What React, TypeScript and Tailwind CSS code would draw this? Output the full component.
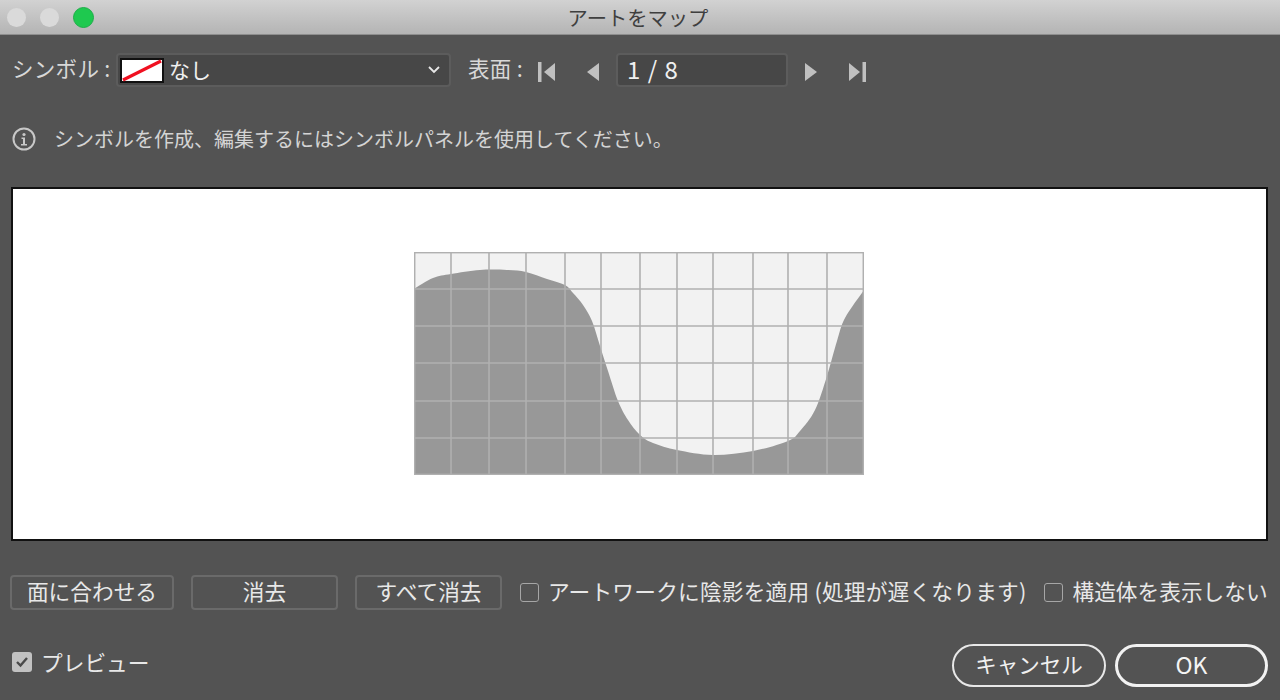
import React from "react";

const font = { fontFamily: '"Noto Sans CJK JP", "Noto Sans", sans-serif' };
const xs = [0.5, 37, 75, 112, 151, 187, 226, 263, 299, 339, 374, 413, 449.5];
const ys = [0.5, 37, 74, 111, 149, 186, 222.5];
const pts: [number, number][] = [
  [0, 37], [19, 26], [37, 22], [66, 18], [93, 18], [112, 20], [133, 27], [151, 33], [159, 41], [169, 53],
  [178, 69], [186, 94], [194, 119], [204, 149], [214, 168], [226, 183], [239, 191], [263, 198], [299, 203],
  [339, 199], [374, 189], [386, 179], [401, 158], [413, 124], [423, 89], [431, 66], [450, 38],
];

function smooth(p: [number, number][]) {
  let d = `M${p[0][0]} ${p[0][1]}`;
  for (let i = 0; i < p.length - 1; i++) {
    const a = p[Math.max(0, i - 1)];
    const b = p[i];
    const c = p[i + 1];
    const e = p[Math.min(p.length - 1, i + 2)];
    const c1x = b[0] + (c[0] - a[0]) / 6;
    const c1y = b[1] + (c[1] - a[1]) / 6;
    const c2x = c[0] - (e[0] - b[0]) / 6;
    const c2y = c[1] - (e[1] - b[1]) / 6;
    d += ` C${c1x} ${c1y} ${c2x} ${c2y} ${c[0]} ${c[1]}`;
  }
  return d + " L450 223 L0 223 Z";
}

function Chart() {
  return (
    <svg width="450" height="223" viewBox="0 0 450 223" className="block">
      <rect x="0" y="0" width="450" height="223" fill="#f2f2f2" />
      <path d={smooth(pts)} fill="#989898" />
      {xs.map((x) => (
        <line key={x} x1={x} x2={x} y1="0" y2="223" stroke="#b0b0b0" strokeWidth="1.6" />
      ))}
      {ys.map((y) => (
        <line key={y} y1={y} y2={y} x1="0" x2="450" stroke="#b0b0b0" strokeWidth="1.6" />
      ))}
      <rect x="0.5" y="0.5" width="449" height="222" fill="none" stroke="#b0b0b0" strokeWidth="1.4" />
    </svg>
  );
}

function Tri({ dir, bar }: { dir: "l" | "r"; bar?: boolean }) {
  return (
    <svg width="18" height="20" viewBox="0 0 18 20" className="block mt-[3px]">
      {dir === "l" ? (
        <>
          {bar && <rect x="0" y="0" width="3.5" height="20" fill="#c0c0c0" />}
          <path d={bar ? "M17 1 L6 10 L17 19 Z" : "M14 1 L2 10 L14 19 Z"} fill="#c0c0c0" />
        </>
      ) : (
        <>
          {bar && <rect x="14.5" y="0" width="3.5" height="20" fill="#c0c0c0" />}
          <path d={bar ? "M1 1 L12 10 L1 19 Z" : "M3 1 L15 10 L3 19 Z"} fill="#c0c0c0" />
        </>
      )}
    </svg>
  );
}

function Btn({ w, children }: { w: string; children: React.ReactNode }) {
  return (
    <div className={`${w} h-[35px] rounded-[4px] border-2 border-[#6a6a6a] flex items-center justify-center pb-[3px] text-[21.7px] text-[#e8e8e8]`}>
      {children}
    </div>
  );
}

function Check() {
  return <div className="w-[19px] h-[19px] rounded-[3px] border-[1.5px] border-[#a6a6a6]" />;
}

export default function App() {
  return (
    <div style={font} className="w-[1280px] h-[700px] overflow-hidden bg-[#535353] flex flex-col">
      <div className="relative h-[35px] shrink-0 bg-gradient-to-b from-[#d2d2d2] to-[#b4b4b4] border-b border-[#8e8e8e] flex items-center justify-center">
        <div className="absolute left-[7px] top-[7px] flex items-center gap-[14px]">
          <div className="w-[19px] h-[19px] rounded-full bg-[#dadada]" />
          <div className="w-[19px] h-[19px] rounded-full bg-[#dadada]" />
          <div className="w-[21px] h-[21px] rounded-full bg-[#1ec94f] border border-[#1cae48]" />
        </div>
        <span className="text-[20.3px] leading-none text-[#3f3f3f] ml-[-4px]">アートをマップ</span>
      </div>

      <div className="flex items-center mt-[18px] h-[34px] pl-[12px] shrink-0">
        <span className="text-[21.5px] text-[#d8d8d8] w-[104px] whitespace-nowrap pb-[3px] tracking-[0.3px]">シンボル :</span>
        <div className="w-[335px] h-[34px] rounded-[4px] bg-[#474747] border-2 border-[#5c5c5c] flex items-center pl-[2px] pr-[8px]">
          <svg width="44" height="25" viewBox="0 0 44 25" className="block shrink-0">
            <rect x="1" y="1" width="42" height="23" fill="#fff" stroke="#111" strokeWidth="2" />
            <line x1="3" y1="22" x2="41" y2="3" stroke="#f01020" strokeWidth="3.2" />
          </svg>
          <span className="ml-[5px] text-[21px] text-[#f0f0f0] leading-none pb-[2px]">なし</span>
          <svg width="14" height="10" viewBox="0 0 14 10" className="ml-auto">
            <path d="M2 2 L7 7 L12 2" fill="none" stroke="#e8e8e8" strokeWidth="1.8" />
          </svg>
        </div>
        <span className="ml-[17px] text-[21.5px] text-[#d8d8d8] w-[70px] whitespace-nowrap pb-[3px] tracking-[0.3px]">表面 :</span>
        <Tri dir="l" bar />
        <div className="ml-[29px]"><Tri dir="l" /></div>
        <div className="ml-[13px] w-[172px] h-[34px] rounded-[4px] bg-[#474747] border-2 border-[#5c5c5c] flex items-center pl-[9px] pb-[2px] text-[24px] text-[#f0f0f0] tracking-[1px]">
          1 / 8
        </div>
        <div className="ml-[14px]"><Tri dir="r" /></div>
        <div className="ml-[28px]"><Tri dir="r" bar /></div>
      </div>

      <div className="flex items-center mt-[35px] h-[34px] pl-[12px] shrink-0">
        <svg width="24" height="24" viewBox="0 0 24 24" className="block shrink-0">
          <circle cx="12" cy="12" r="10.5" fill="none" stroke="#c8c8c8" strokeWidth="2" />
          <circle cx="12" cy="7.5" r="1.6" fill="#c8c8c8" />
          <path d="M9.5 10.5 H13 V17 H15 V18.5 H9 V17 H11 V12 H9.5 Z" fill="#c8c8c8" />
        </svg>
        <span className="ml-[18px] text-[20px] text-[#d4d4d4] whitespace-nowrap">シンボルを作成、編集するにはシンボルパネルを使用してください。</span>
      </div>

      <div className="mx-[11px] mt-[31px] w-[1257px] h-[354px] shrink-0 bg-white border-2 border-[#111] pl-[401px] pt-[63px]">
        <Chart />
      </div>

      <div className="flex items-center mt-[34px] pl-[10px] h-[35px] shrink-0">
        <Btn w="w-[164px]">面に合わせる</Btn>
        <div className="ml-[17px]"><Btn w="w-[147px]">消去</Btn></div>
        <div className="ml-[17px]"><Btn w="w-[147px]">すべて消去</Btn></div>
        <div className="ml-[18px]"><Check /></div>
        <span className="ml-[9px] pb-[3px] text-[21.7px] text-[#e8e8e8] whitespace-nowrap tracking-[0.2px]">アートワークに陰影を適用 (処理が遅くなります)</span>
        <div className="ml-[18px]"><Check /></div>
        <span className="ml-[9px] pb-[3px] text-[21.7px] text-[#e8e8e8] whitespace-nowrap">構造体を表示しない</span>
      </div>

      <div className="flex items-center mt-[34px] pl-[12px] pr-[12px] h-[43px] shrink-0">
        <div className="flex items-center mb-[6px]">
          <div className="w-[20px] h-[20px] rounded-[3px] bg-[#c2c2c2] flex items-center justify-center">
            <svg width="14" height="12" viewBox="0 0 14 12">
              <path d="M2 6 L5.5 9.5 L12 2" fill="none" stroke="#4a4a4a" strokeWidth="2.4" />
            </svg>
          </div>
          <span className="ml-[9px] text-[21.7px] text-[#e8e8e8]">プレビュー</span>
        </div>
        <div className="ml-auto w-[154px] h-[43px] rounded-full border-2 border-[#e8e8e8] flex items-center justify-center pb-[2px] text-[21.5px] text-[#f0f0f0]">キャンセル</div>
        <div className="ml-[9px] w-[153px] h-[43px] rounded-full border-[3px] border-[#f2f2f2] flex items-center justify-center pb-[2px] text-[23px] text-[#f4f4f4]">OK</div>
      </div>
    </div>
  );
}
